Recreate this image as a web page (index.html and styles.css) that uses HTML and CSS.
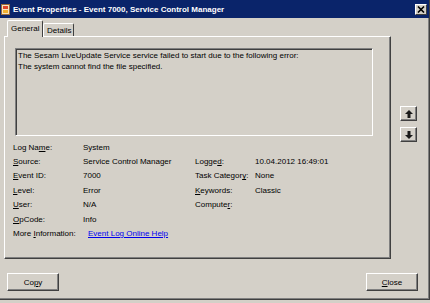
FILE: index.html
```html
<!DOCTYPE html>
<html>
<head>
<meta charset="utf-8">
<link rel="stylesheet" href="styles.css">
</head>
<body>
<div class="window">
  <div class="titlebar">
    <svg class="appicon" width="9" height="11" viewBox="0 0 9 11">
      <rect x="0.5" y="0.5" width="8" height="10" fill="#f4e3c0" stroke="#9a6b3a"/>
      <rect x="2" y="2" width="5" height="3" fill="#e0452a"/>
      <rect x="2" y="6" width="5" height="3" fill="#f0b030"/>
    </svg>
    <span class="title">Event Properties - Event 7000, Service Control Manager</span>
    <div class="xbtn">
      <svg width="8" height="7" viewBox="0 0 8 7"><path d="M1 0.5 L7 6.5 M7 0.5 L1 6.5" stroke="#000" stroke-width="1.6"/></svg>
    </div>
  </div>
  <div class="content">
    <div class="main">
      <div class="tabarea">
        <div class="tabs">
          <div class="tab active">General</div>
          <div class="tab">Details</div>
        </div>
        <div class="panel">
          <div class="msg">The Sesam LiveUpdate Service service failed to start due to the following error:<br>The system cannot find the file specified.</div>
          <div class="fields">
            <span>Log Na<u>m</u>e:</span><span>System</span><span></span><span></span>
            <span><u>S</u>ource:</span><span>Service Control Manager</span><span>Logge<u>d</u>:</span><span>10.04.2012 16:49:01</span>
            <span><u>E</u>vent ID:</span><span>7000</span><span>Task Categor<u>y</u>:</span><span>None</span>
            <span><u>L</u>evel:</span><span>Error</span><span><u>K</u>eywords:</span><span>Classic</span>
            <span><u>U</u>ser:</span><span>N/A</span><span>Compute<u>r</u>:</span><span></span>
            <span><u>O</u>pCode:</span><span>Info</span><span></span><span></span>
          </div>
          <div class="moreinfo"><span>More <u>I</u>nformation:</span><a class="link" href="#">Event Log Online Help</a></div>
        </div>
      </div>
      <div class="nav">
        <div class="navbtn up">
          <svg width="8" height="8" viewBox="0 0 8 8"><polygon points="4,0 8,4 5.5,4 5.5,8 2.5,8 2.5,4 0,4" fill="#1a1a1a"/></svg>
        </div>
        <div class="navbtn down">
          <svg width="8" height="8" viewBox="0 0 8 8"><polygon points="4,8 8,4 5.5,4 5.5,0 2.5,0 2.5,4 0,4" fill="#1a1a1a"/></svg>
        </div>
      </div>
    </div>
    <div class="buttons">
      <div class="btn">Co<u>p</u>y</div>
      <div class="btn"><u>C</u>lose</div>
    </div>
  </div>
</div>
</body>
</html>
```

FILE: styles.css
```css
html, body {
  margin: 0;
  padding: 0;
}
body {
  background: #d4d0c8;
  font-family: "Liberation Sans", Arial, sans-serif;
  font-size: 8px;
  color: #000;
  width: 430px;
  height: 303px;
  overflow: hidden;
}
.window {
  width: 430px;
  height: 300px;
  box-sizing: border-box;
  border-right: 1px solid #404040;
  border-bottom: 1px solid #404040;
  box-shadow: inset -1px -1px 0 #808080;
  display: flex;
  flex-direction: column;
}
.titlebar {
  height: 18px;
  background: #0a246a;
  color: #fff;
  display: flex;
  align-items: center;
  padding-left: 1px;
  flex: none;
}
.appicon {
  flex: none;
}
.title {
  margin-left: 3px;
  font-weight: bold;
  font-size: 8px;
  white-space: nowrap;
}
.xbtn {
  margin-left: auto;
  margin-right: 2px;
  width: 12px;
  height: 11px;
  box-sizing: border-box;
  background: #d4d0c8;
  border-top: 1px solid #fff;
  border-left: 1px solid #fff;
  border-right: 1px solid #404040;
  border-bottom: 1px solid #404040;
  display: flex;
  align-items: center;
  justify-content: center;
}
.content {
  flex: 1;
  display: flex;
  flex-direction: column;
  padding: 2px 0 0 4px;
}
.main {
  display: flex;
}
.tabarea {
  width: 387px;
  display: flex;
  flex-direction: column;
}
.tabs {
  height: 16px;
  display: flex;
  align-items: flex-end;
  padding-left: 3px;
  position: relative;
  z-index: 1;
}
.tab {
  box-sizing: border-box;
  height: 13px;
  padding: 0 4px;
  border-top: 1px solid #fff;
  border-left: 1px solid #fff;
  border-right: 1px solid #404040;
  border-radius: 2px 2px 0 0;
  display: flex;
  align-items: center;
  background: #d4d0c8;
}
.tab.active {
  height: 17px;
  margin-bottom: -1px;
  width: 36px;
  padding: 0 0 2px 3px;
}
.tab + .tab {
  width: 31px;
  padding-left: 3px;
}
.panel {
  height: 223px;
  box-sizing: border-box;
  border-top: 1px solid #fff;
  border-left: 1px solid #fff;
  border-right: 1px solid #404040;
  border-bottom: 1px solid #404040;
  box-shadow: inset -1px -1px 0 #808080;
  display: flex;
  flex-direction: column;
}
.msg {
  margin: 11px 0 0 10px;
  width: 358px;
  height: 88px;
  box-sizing: border-box;
  border-top: 1px solid #808080;
  border-left: 1px solid #808080;
  border-right: 1px solid #fff;
  border-bottom: 1px solid #fff;
  box-shadow: inset 1px 1px 0 #404040;
  padding: 1px 2px;
  line-height: 11px;
}
.fields {
  margin: 4px 0 0 8px;
  display: grid;
  grid-template-columns: 70px 112px 60px auto;
  grid-auto-rows: 14.4px;
  align-items: center;
}
.moreinfo {
  margin-left: 8px;
  height: 14.4px;
  display: flex;
  align-items: center;
}
.moreinfo span {
  width: 75px;
}
.link {
  color: #0000ee;
  text-decoration: underline;
}
.nav {
  width: 38px;
  display: flex;
  flex-direction: column;
  padding: 86px 0 0 9px;
  box-sizing: border-box;
  gap: 6px;
}
.navbtn {
  width: 17px;
  height: 15px;
  box-sizing: border-box;
  border-top: 1px solid #fff;
  border-left: 1px solid #fff;
  border-right: 1px solid #404040;
  border-bottom: 1px solid #404040;
  box-shadow: inset -1px -1px 0 #808080;
  display: flex;
  align-items: center;
  justify-content: center;
}
.buttons {
  margin-top: 14px;
  display: flex;
  justify-content: space-between;
  padding: 0 11px 0 3px;
}
.btn {
  width: 52px;
  height: 18px;
  box-sizing: border-box;
  border-top: 1px solid #fff;
  border-left: 1px solid #fff;
  border-right: 1px solid #404040;
  border-bottom: 1px solid #404040;
  box-shadow: inset -1px -1px 0 #808080;
  display: flex;
  align-items: center;
  justify-content: center;
}
```
